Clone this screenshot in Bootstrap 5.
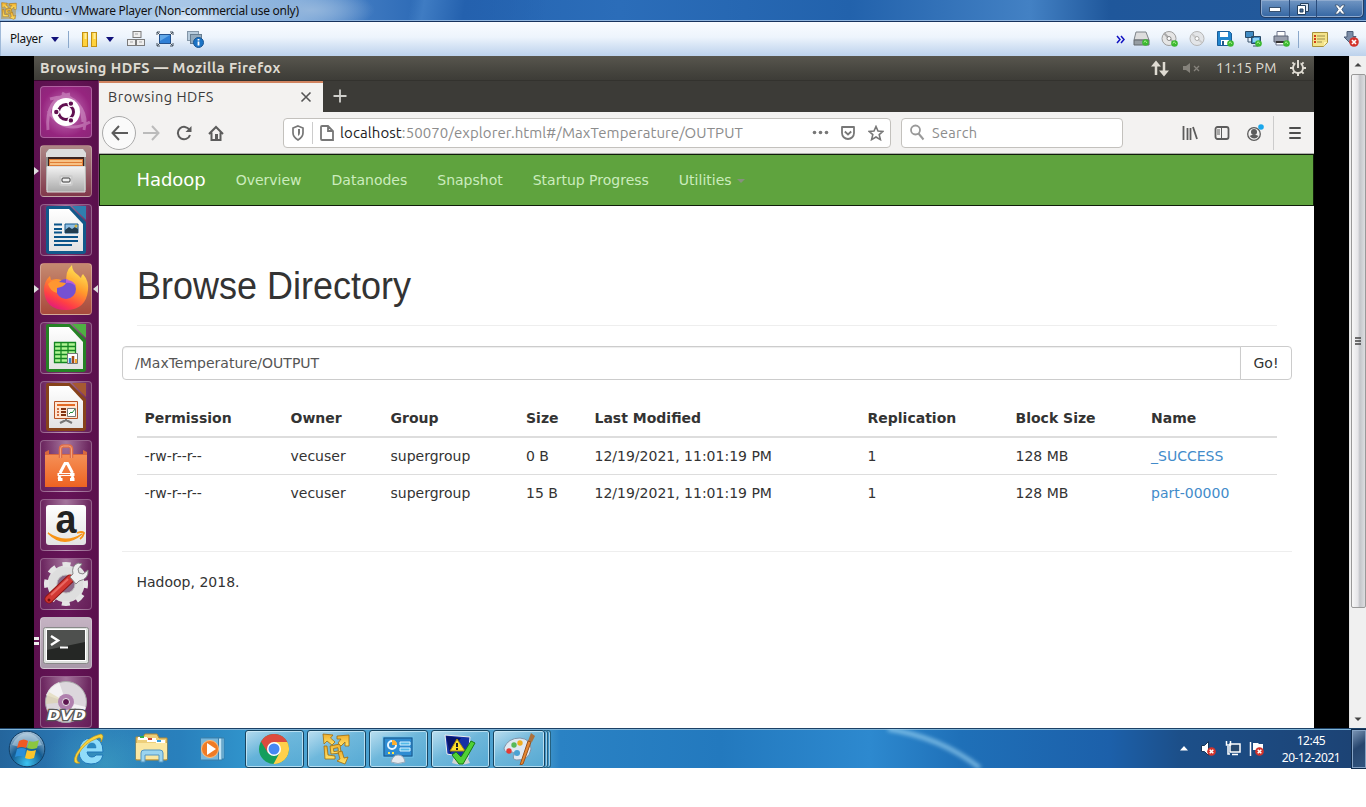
<!DOCTYPE html>
<html lang="en">
<head>
<meta charset="utf-8">
<title>Browsing HDFS</title>
<link href="https://cdn.jsdelivr.net/npm/bootstrap@5.3.0/dist/css/bootstrap.min.css" rel="stylesheet">
<style>
body{width:1366px;height:807px;overflow:hidden;background:#fff;font-family:"DejaVu Sans",sans-serif;font-size:14px;line-height:20px;color:#333}
svg{display:block;flex:none}
.winfont{font-family:"Noto Sans","Open Sans",sans-serif;font-size:12px;line-height:18px;color:#111}
.ubuntu{font-family:Ubuntu,"Noto Sans","Open Sans",sans-serif}
.titlebar{height:22px;padding-left:1px;border-bottom:1px solid #17335e;box-shadow:inset 0 -1px #8fb4dd;background:radial-gradient(ellipse 65px 20px at 310px 10px,#94b6dc 0,transparent 100%),radial-gradient(ellipse 45px 14px at 190px 20px,#e5effa,transparent),radial-gradient(ellipse 40px 12px at 42px 20px,#e5effa,transparent),linear-gradient(100deg,transparent 30%,#3f7cc3 31%,#2461ae 34%,transparent 40%),linear-gradient(90deg,#a5c5e6 0,#a8c7e7 200px,#7eaadb 300px,#3c77bf 370px,#2564b1 450px,#2b6db9 620px,#2262ac 850px,#4381c4 1030px,#1f579b 1110px,#245a9b 1366px)}
.caption-btns{width:104px;height:18px;margin-right:2px;border:1px solid #213c64;border-top:0;border-radius:0 0 5px 5px;box-shadow:inset 0 0 0 1px #8fabcf;background:linear-gradient(rgba(190,210,235,.5),rgba(90,130,180,.3))}
.caption-btns>span{height:18px;display:flex;align-items:center;justify-content:center;border-right:1px solid #294b7b}
.toolbar{height:34px;padding:0 6px 0 9px;background:linear-gradient(#f9fcff,#edf4fc 45%,#d6e4f5 70%,#bdd2ec);border-left:1px solid #9fb9d8}
.vsep{width:1px;background:#8ba8cb}
.stage{height:672px;background:#000}
.vm{width:1280px}
.panel-top{height:24px;background:linear-gradient(#58564e,#44433d 70%,#3d3c37);color:#dfdbd2;padding:0 7px 0 6px;font-size:14.5px}
.launcher{width:65px;background:linear-gradient(90deg,#5c114e,#651457 50%,#5a104c);padding:5px 0 0 6px;gap:7px;border-top:1px solid #35082d;border-right:1px solid #7b3a70;overflow:hidden}
.tile{width:52px;height:52px;flex:none;border-radius:4px;border:1px solid rgba(255,255,255,.28);background:radial-gradient(ellipse at 50% 0,rgba(255,255,255,.42),rgba(255,255,255,.1) 65%,rgba(255,255,255,.06));position:relative}
.tile>svg{position:absolute;left:-1px;top:-1px;overflow:visible}
.pip,.pip-r{position:absolute;top:21px;width:0;height:0;border:4px solid transparent}
.pip{left:-7px;border-left:5px solid #ddd;border-right:0}
.pip-r{right:-7px;border-right:5px solid #ddd;border-left:0}
.tabstrip{height:32px;background:#3c3b37;border-top:1px solid #33322e}
.tabx{width:224px;background:#f3f2f0;border-top:2px solid #d0835f;padding:0 11px 2px 9px;font-size:14.5px;color:#3b3b3b}
.navtools{height:42px;background:#f3f2f1;border-bottom:1px solid #aeb0ad}
.back{width:34px;height:34px;border:1px solid #aaa;border-radius:50%;background:#fafafa}
.field{height:30px;background:#fff;border:1px solid #c3c1bd;border-radius:4px;font-size:15px;color:#8c8c8c}
.hdfs{height:52px;background:#5fa33e;border:1px solid #101d0a;padding:0 0 0 36.500px}
.hdfs .navbar-brand{font-size:18px;color:#fff;margin:0 15px 0 0;padding:0;letter-spacing:-.05px}
.hdfs .navbar-nav .nav-link{color:#cbecbd;padding:0 15px;font-size:14px}
.caret{display:inline-block;border:4px solid transparent;border-top-color:#87907f;border-bottom:0;margin-left:1px;vertical-align:middle}
.page{background:#fff;height:522px;padding:59px 22px 0 23px}
.page h1{font-family:"Liberation Sans",Arial,sans-serif;font-size:36px;font-weight:400;line-height:40px;margin:0;transform:translateY(1px) scaleY(1.1);color:#333}
.header-box{margin:0 15px;padding-bottom:20px;border-bottom:1px solid #eee}
.pathbox{margin-top:20px;height:34px}
.pathbox .form-control{font-size:14px;line-height:20px;color:#555;border-color:#ccc;padding:6px 12px;border-radius:4px 0 0 4px;box-shadow:inset 0 1px 1px rgba(0,0,0,.075)}
.pathbox .btn{font-size:14px;line-height:20px;width:52px;padding:6px 0;border:1px solid #ccc;color:#333;background:#fff;border-radius:0 4px 4px 0}
.files{table-layout:fixed;width:1140px;margin:20px 15px 40px;border-collapse:separate;border-spacing:0}
.files th,.files td{padding:8px 8px 8px 7.500px;line-height:20px;white-space:nowrap}
.files thead th{height:38px;border-bottom:2px solid #ddd}
.files tbody tr+tr td{border-top:1px solid #ddd}
.files a{color:#428bca;text-decoration:none}
.rule{height:1px;background:#eee;margin-bottom:20px}
.scroller{width:17px;background:#f0f0f0;border-left:1px solid #e2e2e2}
.thumb{width:15px;height:534px;margin:2px 0 0 0;border:1px solid #999;border-radius:2px;background:linear-gradient(90deg,#f7f7f7,#e5e5e8 45%,#c3c5c9 60%,#dcdde0)}
.taskbar{height:40px;border-top:1px solid #1d4166;box-shadow:inset 0 1px #7fb4d8;background:radial-gradient(ellipse 60px 50px at 105px 35px,rgba(80,195,205,.35),transparent),linear-gradient(90deg,#24659c 0,#2a78b4 70px,#2980bc 180px,#3093cb 245px,#4aa2d2 300px,#4b9fce 540px,#2a82c4 560px,#2379be 720px,#2d89cf 870px,#1f70b8 960px,#1c60aa 1110px,#1c4f89 1180px,#1c4273 1366px)}
.sheen{left:880px;top:0;width:120px;height:39px;overflow:hidden}
.task{width:59px;height:38px;border:1px solid #174460;border-radius:3px;box-shadow:inset 0 0 0 1px rgba(210,238,250,.75);background:linear-gradient(150deg,rgba(225,243,250,.75),rgba(140,202,228,.55) 45%,rgba(100,180,215,.45));margin-right:3px}
.stackedge{width:4px;height:38px;border:1px solid #24607f;border-left:0;border-radius:0 3px 3px 0;box-shadow:inset -1px 0 #a1d0e6;margin-left:-1px}
.clock{font-size:12px;line-height:17px;color:#fff;width:60px;letter-spacing:-.4px}
.showdesk{width:14px;height:38px;border:1px solid #86a3c4;outline:1px solid #102b4c;background:linear-gradient(145deg,#7892b2,#27466e 45%,#31547e)}
</style>
</head>
<body>
<svg width="0" height="0" class="position-absolute" aria-hidden="true"><defs>
<linearGradient id="gold" x1="0" y1="0" x2="0" y2="1"><stop offset="0" stop-color="#f0ae2c"/><stop offset="1" stop-color="#ffe46a"/></linearGradient>
<linearGradient id="silver" x1="0" y1="0" x2="0" y2="1"><stop offset="0" stop-color="#f2f2f2"/><stop offset="1" stop-color="#a9a9a9"/></linearGradient>
<linearGradient id="paper" x1="0" y1="0" x2="0" y2="1"><stop offset="0" stop-color="#fff"/><stop offset="1" stop-color="#e3e3e3"/></linearGradient>
<linearGradient id="flame" x1=".8" y1="0" x2=".3" y2="1"><stop offset="0" stop-color="#fff05a"/><stop offset=".45" stop-color="#ff9a2c"/><stop offset=".8" stop-color="#ff3f45"/><stop offset="1" stop-color="#e31b7b"/></linearGradient>
<linearGradient id="bag" x1="0" y1="0" x2="0" y2="1"><stop offset="0" stop-color="#f58f55"/><stop offset="1" stop-color="#ee6322"/></linearGradient>
<radialGradient id="orb" cx=".5" cy=".9" r=".9"><stop offset="0" stop-color="#3cc4f2"/><stop offset=".5" stop-color="#155c92"/><stop offset="1" stop-color="#a9c3d8"/></radialGradient>
<symbol id="boxes" viewBox="0 0 28 32"><g fill="url(#gold)" stroke="#a06c0c" stroke-width=".8" stroke-linejoin="round"><path fill-rule="evenodd" d="M8 13l10-2 1 9-10 1zM11.500 15.500l4.500-.8.300 3.300-4.500.6z"/><path d="M1 1l10 1-2.500 3L13 9l-3 3-5-4-3 3z"/><path d="M15 3l12-1v11h-4V9l-4 4-3-3 3-4h-4z"/><path d="M16 19l4-1 2 7 4-1-3 7-8-3 3-2z"/><path d="M2 13l3 0 1 9 7 1v3H3z"/></g></symbol>
<symbol id="badge" viewBox="0 0 7 7"><circle cx="3.500" cy="3.500" r="3.300" fill="#3bb830"/><path d="M2 3.500l1.200-1.800L5 4" fill="none" stroke="#a9f28e"/></symbol>
<symbol id="redx" viewBox="0 0 10 10"><circle cx="5" cy="5" r="4.800" fill="#d3332b"/><path d="M3 3l4 4M7 3L3 7" stroke="#fff" stroke-width="1.700"/></symbol>
</defs></svg>

<header class="titlebar winfont d-flex align-items-center">
 <svg width="16" height="18"><rect y="1" width="15" height="16" fill="#b98a24" opacity=".45"/><use href="#boxes"/></svg>
 <span class="ms-1" style="letter-spacing:-.26px">Ubuntu - VMware Player (Non-commercial use only)</span>
 <div class="caption-btns ms-auto d-flex align-self-start">
  <span style="width:29px"><svg width="12" height="5"><rect x=".5" y=".5" width="11" height="4" fill="#fff" stroke="#37506f"/></svg></span>
  <span style="width:27px"><svg width="12" height="12"><path d="M3.500.5h8v8h-8z" fill="#dce6f2" stroke="#24405f"/><path d="M.5 2.500h8v9h-8z" fill="#fff" stroke="#24405f"/><path d="M3 6h3v3H3z" fill="#456b98" stroke="#24405f"/></svg></span>
  <span class="border-0 flex-fill"><svg width="12" height="11"><path d="M1 1h3l2 2.500L8 1h3L7.800 5.500 11 10H8L6 7.500 4 10H1l3.200-4.500z" fill="#fff" stroke="#37506f" stroke-width=".8"/></svg></span>
 </div>
</header>

<div class="toolbar winfont d-flex align-items-center">
 <span class="text-nowrap" style="width:41px;letter-spacing:-.3px;font-size:11.800px;margin-top:-2px">Player</span>
 <svg width="8" height="5"><path d="M0 0h8L4 5z" fill="#11117b"/></svg>
 <i class="vsep" style="height:17px;margin:0 13px 0 9px"></i>
 <svg width="15" height="15"><rect x=".5" y=".5" width="5" height="14" fill="#ffd23d" stroke="#c29116"/><rect x="9.500" y=".5" width="5" height="14" fill="#ffd23d" stroke="#c29116"/><path d="M3.500 1v6M12.500 1v6" stroke="#ffec9b" stroke-width="2"/></svg>
 <svg style="margin:0 13px 0 9px" width="8" height="5"><path d="M0 0h8L4 5z" fill="#11117b"/></svg>
 <svg width="18" height="16"><g fill="#eee" stroke="#7b7b7b"><rect x="6" y=".5" width="8" height="6"/><rect x=".5" y="8.500" width="8" height="6"/><rect x="9.500" y="8.500" width="8" height="6"/></g><path d="M8 3h3M3 11h3M12 11h3" stroke="#a7a7a7"/></svg>
 <svg style="margin:0 13px 0 11px" width="18" height="16"><path d="M3.500 3.500h11v9h-11z" fill="#2f7fd6" stroke="#225290"/><path d="M4 10l10-6H4z" fill="#62a8e8"/><path d="M1 4V1h3M14 1h3v3M17 12v3h-3M4 15H1v-3M1 1l3 3M17 1l-3 3M17 15l-3-3M1 15l3-3" stroke="#47525e" fill="none"/></svg>
 <svg width="17" height="17"><rect x=".5" y=".5" width="11" height="9" fill="#b7cbdc" stroke="#8396a8"/><rect x="3.500" y="3.500" width="11" height="9" fill="#93aabd" stroke="#667d91"/><circle cx="11.500" cy="11.500" r="5" fill="#1b73c5" stroke="#175594"/><path d="M11.500 10.500v4M11.500 8v1.500" stroke="#fff" stroke-width="1.800"/></svg>
 <div class="ms-auto d-flex align-items-center" style="gap:11px">
  <svg style="margin-right:-3px" width="9" height="9"><path d="M1 1l3 3.500L1 8M5 1l3 3.500L5 8" fill="none" stroke="#1212c2" stroke-width="1.500"/></svg>
  <svg width="17" height="16"><path d="M3 1h10l3 8H1z" fill="#ddd" stroke="#7e8489"/><path d="M1 9h15v5H1z" fill="#969da2" stroke="#62686d"/><use href="#badge" x="9" y="8" width="7" height="7"/></svg>
  <svg width="17" height="16"><circle cx="8" cy="7.500" r="7" fill="#e5e5e5" stroke="#9d9d9d"/><path d="M8 7.500L3 2M8 7.500l5 4" stroke="#aaa" stroke-width="2"/><circle cx="8" cy="7.500" r="2" fill="#fff" stroke="#888"/><use href="#badge" x="10" y="9" width="7" height="7"/></svg>
  <svg width="17" height="16"><circle cx="8" cy="7.500" r="7" fill="#e3e5e8" stroke="#b5b5b5"/><path d="M8 7.500L3 3M8 7.500l5 4" stroke="#ccc" stroke-width="2"/><circle cx="8" cy="7.500" r="2" fill="#fff" stroke="#aaa"/></svg>
  <svg width="17" height="16"><path d="M.5.500h12l2 2v12H.5z" fill="#2386cf" stroke="#195d99"/><path d="M3 1h8v5H3zM4 9h8v5H4z" fill="#fff"/><path d="M5 10h2v4H5z" fill="#235b87"/><use href="#badge" x="10" y="9" width="7" height="7"/></svg>
  <svg width="17" height="16"><path d="M.5.500h8v6h-8zM6.500 5.500h9v7h-9z" fill="#418cc4" stroke="#294a67"/><path d="M8 7h6v4H8z" fill="#8bd2f8"/><path d="M3 7v4h3M8 15h5" stroke="#38526a" fill="none"/><use href="#badge" x="10" y="9" width="7" height="7"/></svg>
  <svg width="17" height="16"><path d="M4 .5h8V6H4zM3 10h10v4H3z" fill="#fff" stroke="#6c748c"/><path d="M1 5h14v6H1z" fill="#999fae" stroke="#5b6274"/><path d="M3 11h9" stroke="#333" stroke-width="2"/><use href="#badge" x="10" y="9" width="7" height="7"/></svg>
  <i class="vsep" style="height:17px;margin-left:-3px"></i>
  <svg width="17" height="15" style="margin-left:2px"><path d="M.5.500h15v10l-4 4H.5z" fill="#f4e48a" stroke="#a8923c"/><path d="M2 4h2M2 7h2M2 10h2" stroke="#d33b19" stroke-width="2"/><path d="M5 4h8M5 7h8M5 10h5" stroke="#9d8e4c"/><path d="M12 14v-4h3z" fill="#fff5b2"/></svg>
  <svg width="17" height="16" style="margin-left:3px"><path d="M4 .5h6v5h3L7 12 1 6h3z" fill="#7b8da8" stroke="#4d5d77"/><use href="#redx" x="6" y="6" width="10" height="10"/></svg>
 </div>
</div>

<main class="stage d-flex">
 <div style="width:34px"></div>
 <div class="vm d-flex flex-column">
  <div class="panel-top ubuntu d-flex align-items-center">
   <b style="letter-spacing:.44px">Browsing HDFS — Mozilla Firefox</b>
   <div class="ms-auto d-flex align-items-center">
    <svg width="19" height="17"><path d="M5 15V4M13 2v11" stroke="#dfdbd2" stroke-width="2.500"/><path d="M0 6.500l5-6 5 6zM8 10.500h10l-5 6z" fill="#dfdbd2"/></svg>
    <svg style="margin:0 15px 0 13px" width="18" height="12"><path d="M0 4h3l4-3v10L3 8H0z" fill="#85827b"/><path d="M11 4l5 5M16 4l-5 5" stroke="#85827b" stroke-width="1.300"/></svg>
    <span class="text-nowrap" style="width:61px;letter-spacing:.22px;font-size:14px">11:15 PM</span>
    <svg style="margin-left:12px" width="18" height="18" fill="none" stroke="#dfdbd2"><circle cx="9" cy="9" r="5" stroke-width="2"/><path d="M1 9h3M14 9h3M9 14v3M3.400 3.400l2 2M14.600 3.400l-2 2M3.400 14.600l2-2M14.600 14.600l-2-2" stroke-width="2"/><path d="M9 1v8" stroke="#4b4a44" stroke-width="5"/><path d="M9 1v8" stroke-width="2"/></svg>
   </div>
  </div>
  <div class="d-flex flex-fill" style="height:648px">
   <nav class="launcher d-flex flex-column">
    <div class="tile" style="background:radial-gradient(circle,#c97dbe,#96257f 70%,#8c2679)"><svg width="52" height="52"><path d="M8 44Q5 12 30 8M44 44Q50 20 22 7M10 13Q42 4 43 36M50 36Q25 50 8 25" stroke="#dfaed7" opacity=".45" stroke-width="3" fill="none"/><circle cx="26" cy="26" r="14" fill="#fff"/><circle cx="26" cy="26" r="7.500" fill="none" stroke="#611051" stroke-width="3"/><path d="M26 26h-10M26 26l5-8.700M26 26l5 8.700" stroke="#fff" stroke-width="1.300"/><circle cx="26" cy="26" r="5.500" fill="#fff"/><g stroke="#fff" stroke-width="1.200" fill="#611051"><circle cx="16.300" cy="26" r="2.800"/><circle cx="30.900" cy="17.600" r="2.800"/><circle cx="30.900" cy="34.400" r="2.800"/></g></svg></div>
    <div class="tile" style="background:linear-gradient(#ad8786,#81384b)"><i class="pip"></i><svg width="52" height="52"><path d="M6 7l3-3h34l3 3v38H6z" fill="#8f8e8b"/><path d="M6 8l3-4h34l3 4v4H6z" fill="#ddd"/><path d="M8 12h36v10H8z" fill="#3b2420"/><path d="M9 14h34v8H9z" fill="#df7d36"/><path d="M10 16h32M10 19h32" stroke="#ffd7a0" stroke-width="1.300"/><path d="M7 21.500h38V47H7z" fill="url(#silver)" stroke="#ddd"/><rect x="20" y="31" width="12" height="9" rx="2" fill="#eee" stroke="#ccc" stroke-width="2"/><rect x="22" y="33" width="8" height="4" rx="1" fill="#eee" stroke="#333"/></svg></div>
    <div class="tile"><svg width="52" height="52"><path d="M6 4q0-2 2-2h22l16 16v29q0 3-3 3H9q-3 0-3-3z" fill="#12598b"/><path d="M9 5h20l14 15v27H9z" fill="url(#paper)"/><path d="M32 2h14v14z" fill="#2f7eaf"/><path d="M14 20.500h8M14 25h8M14 28.500h8M14 33h24M14 37h24M14 41h18" stroke="#0a5489" stroke-width="2"/><path d="M25 20h13v9H25z" fill="#8fbee3" stroke="#12598b"/><path d="M25 29v-3l4-3 3 2 3-2 3 2v4z" fill="#223d4f"/><circle cx="36" cy="22" r="1.500" fill="#d1b440"/></svg></div>
    <div class="tile" style="background:linear-gradient(#c58a70,#a8493b)"><i class="pip"></i><i class="pip-r"></i><svg width="52" height="52"><path d="M4 27q0-9 6-14l1 4 5-1q5 0 8 3l3 2q-3-12 5-19 0 6 6 10l3 3q0-2 2-4 6 7 5 16-2 20-22 20Q5 47 4 27z" fill="url(#flame)"/><circle cx="26" cy="26" r="10" fill="#7551d2"/><path d="M26 16q8 0 10 8-4-5-10-4z" fill="#b85fda"/><path d="M26 17q6 0 9 4 0-4-3-6z" fill="#ffb236"/><path d="M8 21q5-6 11-2l7 1q-2 4-9 5v5q-7-2-9-9" fill="#ff9630"/></svg></div>
    <div class="tile"><svg width="52" height="52"><path d="M6 4q0-2 2-2h22l16 16v29q0 3-3 3H9q-3 0-3-3z" fill="#258225"/><path d="M9 5h20l14 15v27H9z" fill="url(#paper)"/><path d="M32 2h14v14z" fill="#4fb043"/><path d="M14 20h21v20H14z" fill="#b0f594"/><path d="M14 20.500h22M14 24.500h22M14 28.500h22M14 32.500h22M14 36.500h22M14 40.500h22M14.500 20v21M21 20v21M28 20v21M35.500 20v21" stroke="#158622" fill="none" stroke-width="1.300"/><path d="M27.500 31.500h10v10h-10z" fill="#fff" stroke="#777"/><path d="M30 41v-5" stroke="#3485c9" stroke-width="2.500"/><path d="M33 41v-7" stroke="#a34a18" stroke-width="2.500"/><path d="M36 41v-4" stroke="#f4a62a" stroke-width="2"/></svg></div>
    <div class="tile"><svg width="52" height="52"><path d="M6 4q0-2 2-2h22l16 16v29q0 3-3 3H9q-3 0-3-3z" fill="#87431b"/><path d="M9 5h20l14 15v27H9z" fill="url(#paper)"/><path d="M32 2h14v14z" fill="#a65931"/><path d="M14.500 20.500h23v17h-23z" fill="#ffe4d0" stroke="#b85324"/><path d="M17 24h18" stroke="#e36a25" stroke-width="2"/><path d="M17 28h2M17 31h2M17 34h2" stroke="#cd7045" stroke-width="2"/><path d="M21 28h5M21 31h5M21 34h5" stroke="#833412" stroke-width="2"/><path d="M27.500 27.500h8v8h-8z" fill="#fff" stroke="#777"/><path d="M29 33l2-2 1 1 3-4" fill="none" stroke="#238b36"/><path d="M26 38v2M26 39l-6 3M26 39l6 3" stroke="#777" stroke-width="2"/></svg></div>
    <div class="tile"><svg width="52" height="52"><path d="M5 12l4-2v4h34v-4l4 2v35H5z" fill="#d9683d"/><path d="M5 15h42v32H5z" fill="url(#bag)"/><path d="M20.500 18V9q0-3 3-3h5q3 0 3 3v9" fill="none" stroke="#df6e47" stroke-width="3.500"/><path d="M20.500 18V9q0-3 3-3h5q3 0 3 3v9" fill="none" stroke="#f2a27e" stroke-width="1"/><path d="M20 33l5-9.500h2.500l5 9.500" stroke="#fff" stroke-width="3" fill="none"/><path d="M17.500 34.500h17M18 39.500h4.500M30 39.500h4.500M20 36l-1 3M32 36l1 3" stroke="#fff" stroke-width="3"/><path d="M19 34.500h11" stroke="#ed7440"/></svg></div>
    <div class="tile"><svg width="52" height="52"><rect x="6" y="6" width="40" height="40" rx="3" fill="url(#paper)"/><text x="15.500" y="33.500" textLength="21" lengthAdjust="spacingAndGlyphs" font-family="Liberation Sans,sans-serif" font-size="41" font-weight="bold" fill="#222">a</text><path d="M8 34q18 12 34 1-18 15-34-1" stroke="#f79317" stroke-width="1.500" fill="#f79317"/><path d="M37 34q5-2 7 0-1 4-4 6" fill="none" stroke="#f79317" stroke-width="1.800"/></svg></div>
    <div class="tile"><svg width="52" height="52"><circle cx="26" cy="26" r="13.500" fill="none" stroke="#dedede" stroke-width="10"/><circle cx="26" cy="26" r="19.500" fill="none" stroke="#e5e5e5" stroke-width="5" stroke-dasharray="8 7.300" stroke-dashoffset="4"/><circle cx="26" cy="26" r="9" fill="#8b6887" stroke="#bbb"/><path d="M9 41l21-20" stroke="#8d1717" stroke-width="9" stroke-linecap="round"/><path d="M9 41l21-20" stroke="#d23833" stroke-width="7" stroke-linecap="round"/><path d="M11 37l17-16" stroke="#e96862" stroke-width="2"/><path d="M30 19l3-3q-2-8 5-11l4 1-4 5 1 4 4 1 5-4q1 9-9 11l-3 3z" fill="#eee" stroke="#888"/><circle cx="9" cy="42" r="1.500" fill="#711"/></svg></div>
    <div class="tile" style="background:linear-gradient(#c5b3c3,#a99aaa)"><i class="pip" style="top:19px;border:0;width:5px;height:3px;background:#eee"></i><i class="pip" style="top:24px;border:0;width:5px;height:3px;background:#eee"></i><svg width="52" height="52"><rect x="3.500" y="10.500" width="45" height="36" rx="2" fill="#dfe2df" stroke="#888"/><rect x="6.500" y="12.500" width="39" height="31" fill="#252725" stroke="#fff"/><path d="M7 13h38v12L7 33z" fill="#4e504e"/><path d="M11 19l7 4.500-7 4.500" fill="none" stroke="#fff" stroke-width="2.500"/><path d="M20 30.500h8" stroke="#fff" stroke-width="2"/></svg></div>
    <div class="tile"><svg width="52" height="52"><circle cx="26" cy="26" r="20.500" fill="#dcd7dc" stroke="#aaa"/><path d="M26 26L6 19q4-10 13-13zM26 26l20 5q-2 7-7 10z" fill="#fff" opacity=".65"/><path d="M26 26L6 28q0-7 3-12z" fill="#d9cf9e" opacity=".5"/><circle cx="26" cy="26" r="8" fill="#b080ae"/><circle cx="26" cy="26" r="3.500" fill="#5d1650" stroke="#eee"/><text x="7" y="43.500" textLength="39" lengthAdjust="spacingAndGlyphs" font-family="DejaVu Sans,sans-serif" font-size="14" font-weight="bold" font-style="italic" fill="#fff" stroke="#555" stroke-width="2.500" paint-order="stroke">DVD</text></svg></div>
   </nav>
   <section class="flex-fill d-flex flex-column" style="width:1215px">
    <div class="tabstrip ubuntu d-flex">
     <div class="tabx d-flex align-items-center justify-content-between"><span style="letter-spacing:.47px">Browsing HDFS</span><svg width="12" height="12"><path d="M1.500 1.500l9 9M10.500 1.500l-9 9" stroke="#555" stroke-width="1.600"/></svg></div>
     <svg class="align-self-center" style="margin:-2px 0 0 9px" width="16" height="16"><path d="M8 1.500v13M1.500 8h13" stroke="#d0d0cc" stroke-width="1.800"/></svg>
    </div>
    <div class="navtools ubuntu d-flex align-items-center">
     <div class="back d-flex align-items-center justify-content-center" style="margin-left:3px"><svg width="17" height="16"><path d="M8 1L1.500 8 8 15M2 8h15" fill="none" stroke="#5c5c5c" stroke-width="2"/></svg></div>
     <svg style="margin-left:7px" width="17" height="16"><path d="M9 1l6.500 7L9 15M0 8h15" fill="none" stroke="#bbb" stroke-width="2"/></svg>
     <svg style="margin-left:16px" width="16" height="16"><path d="M13.500 5A6.200 6.200 0 1 0 14 10" fill="none" stroke="#5c5c5c" stroke-width="2"/><path d="M15.500 1v6h-6z" fill="#5c5c5c"/></svg>
     <svg style="margin-left:16px" width="16" height="16"><path d="M1 9l7-7 7 7M3.500 7.500V15h9V7.500" fill="none" stroke="#5c5c5c" stroke-width="2"/><path d="M7 9h3v6H7z" fill="#5c5c5c"/></svg>
     <div class="field d-flex align-items-center" style="width:608px;margin-left:59px;padding:0 6px 0 7px">
      <svg width="14" height="16"><path d="M7 1l5 2v5q0 4-5 7-5-3-5-7V3z" fill="none" stroke="#777" stroke-width="1.700"/><path d="M7 4v7q2-1 2-3V4z" fill="#777"/></svg>
      <i style="height:22px;width:1px;background:#ccc;margin:0 7px"></i>
      <svg width="14" height="16"><path d="M2 1h6l5 5v9H2q-1 0-1-1V2q0-1 1-1M8 1v5h5" fill="none" stroke="#777" stroke-width="1.800"/></svg>
      <span class="text-nowrap" style="margin-left:6px;letter-spacing:.09px"><span style="color:#222">localhost</span>:50070/explorer.html#/MaxTemperature/OUTPUT</span>
      <svg class="ms-auto" width="17" height="5"><circle cx="2.500" cy="2.500" r="1.800" fill="#777"/><circle cx="8.500" cy="2.500" r="1.800" fill="#777"/><circle cx="14.500" cy="2.500" r="1.800" fill="#777"/></svg>
      <svg style="margin:0 12px 0 11px" width="16" height="16"><path d="M2 2h12v6a6 6 0 0 1-12 0z" fill="none" stroke="#777" stroke-width="1.800" stroke-linejoin="round"/><path d="M4.800 6.500L8 9.500l3.200-3" fill="none" stroke="#777" stroke-width="1.800"/></svg>
      <svg width="16" height="16"><path d="M8 1.500l2 4.500 5 .4-3.800 3.200 1.200 5L8 12l-4.400 2.600 1.200-5L1 6.400 6 6z" fill="none" stroke="#777" stroke-width="1.600"/></svg>
     </div>
     <div class="field d-flex align-items-center" style="width:222px;margin-left:10px;padding-left:8px">
      <svg width="15" height="17"><circle cx="5.500" cy="6" r="4.500" fill="none" stroke="#999" stroke-width="1.800"/><path d="M8.500 9.500l5 6" stroke="#999" stroke-width="2"/></svg><span style="margin-left:7px;font-size:14.5px;letter-spacing:.3px">Search</span>
     </div>
     <svg style="margin-left:59px" width="16" height="15"><path d="M1.500 1v14M5.500 3v12M8.500 3v12M11 2l4 12" stroke="#5c5c5c" stroke-width="1.800"/></svg>
     <svg style="margin-left:16px" width="16" height="16"><rect x="1.500" y="2" width="13" height="12" rx="2" fill="none" stroke="#5c5c5c" stroke-width="1.800"/><path d="M7.500 2v12M3 5h3M3 7h3M3 9h3" stroke="#5c5c5c"/></svg>
     <svg style="margin-left:16px" width="20" height="22"><circle cx="8" cy="12" r="6.300" fill="none" stroke="#5c5c5c" stroke-width="1.300"/><circle cx="8" cy="10" r="3" fill="#5c5c5c"/><path d="M3.500 14q4.500-2.500 9 0-4 5-9 0" fill="#5c5c5c"/><circle cx="15" cy="5" r="2.800" fill="#1aa7ec"/></svg>
     <i style="width:1px;height:34px;background:#ccc;margin-left:7px"></i>
     <svg style="margin-left:15px" width="12" height="14"><path d="M1 2h10M1 7h10M1 12h10" stroke="#4d4d4d" stroke-width="1.900" stroke-linecap="round"/></svg>
    </div>
    <nav class="navbar navbar-expand hdfs">
     <a class="navbar-brand" href="#">Hadoop</a>
     <div class="navbar-nav"><a class="nav-link" href="#">Overview</a><a class="nav-link" href="#">Datanodes</a><a class="nav-link" href="#">Snapshot</a><a class="nav-link" href="#">Startup Progress</a><a class="nav-link" href="#">Utilities <span class="caret"></span></a></div>
    </nav>
    <div class="page">
     <div class="header-box"><h1>Browse Directory</h1></div>
     <div class="input-group pathbox"><input class="form-control" value="/MaxTemperature/OUTPUT" aria-label="Directory"><button class="btn" type="button">Go!</button></div>
     <table class="files">
      <colgroup><col style="width:146px"><col style="width:100px"><col style="width:135.500px"><col style="width:68.500px"><col style="width:273px"><col style="width:148px"><col style="width:135.500px"><col></colgroup>
      <thead><tr><th>Permission</th><th>Owner</th><th>Group</th><th>Size</th><th>Last Modified</th><th>Replication</th><th>Block Size</th><th>Name</th></tr></thead>
      <tbody>
       <tr><td>-rw-r--r--</td><td>vecuser</td><td>supergroup</td><td>0 B</td><td>12/19/2021, 11:01:19 PM</td><td>1</td><td>128 MB</td><td><a href="#">_SUCCESS</a></td></tr>
       <tr><td>-rw-r--r--</td><td>vecuser</td><td>supergroup</td><td>15 B</td><td>12/19/2021, 11:01:19 PM</td><td>1</td><td>128 MB</td><td><a href="#">part-00000</a></td></tr>
      </tbody>
     </table>
     <div class="rule"></div>
     <div style="padding-left:14.500px">Hadoop, 2018.</div>
    </div>
   </section>
  </div>
 </div>
 <div class="scroller ms-auto d-flex flex-column align-items-center">
  <svg width="16" height="16"><path d="M4.500 10.500h7L8 7z" fill="#444"/></svg>
  <div class="thumb d-flex align-items-center justify-content-center"><svg width="8" height="9"><path d="M1 1h6M1 4h6M1 7h6" stroke="#444" stroke-width="1.500"/></svg></div>
  <svg class="mt-auto" width="16" height="17"><path d="M4.500 6.500h7L8 10z" fill="#444"/></svg>
 </div>
</main>

<footer class="taskbar d-flex align-items-center position-relative">
 <div class="sheen position-absolute"><svg width="120" height="39"><path d="M8 0Q60 8 100 39" fill="none" stroke="#a7dcf6" stroke-width="4" opacity=".75" style="filter:blur(2px)"/></svg></div>
 <svg style="margin-left:8px" width="38" height="38"><circle cx="19" cy="19" r="17.800" fill="url(#orb)" stroke="#123f66"/><path d="M4 15Q10 3 19 3t15 12q-15 5-30 0" fill="#dceaf3" opacity=".4"/><path d="M11 11q5-3 9 0l-2 7q-4-2-9 0z" fill="#ef5a24"/><path d="M21 11q5 2 10-1l-2 8q-5 2-10 0z" fill="#8cc63f"/><path d="M9 19q5-2 9 0l-2 8q-4-2-9 0z" fill="#2b8fd9"/><path d="M19 20q4 2 9 0l-2 8q-5 2-9 0z" fill="#fdc52c"/></svg>
 <svg style="margin-left:28px" width="30" height="32"><path d="M5 18q1-13 13-13 11 0 11 14H13q1 5 5 5 3 0 4-2h7q-2 9-12 9Q5 31 5 18z" fill="#8fdcfa" stroke="#1f77b8"/><path d="M13 15q1-5 5-5t4 5z" fill="#2a8ac2" stroke="#1f77b8" stroke-width=".5"/><path d="M6 30Q-3 32 2 21 12 4 27 1q4 1 0 8 1-5-3-4Q10 10 4 22q-3 6 2 8" fill="#f7d33e" stroke="#bb9018" stroke-width=".6"/></svg>
 <svg style="margin-left:31px" width="33" height="31"><path d="M1 4h7l2-3h12l2 4h8v22H1z" fill="#edcf7a" stroke="#b38a34"/><path d="M3 4h9v3H3zM12 5h9v4h-9zM21 7h9v4h-9z" fill="#fff"/><path d="M5 3h4v2H5z" fill="#2daf4a"/><path d="M13 5h4v2h-4z" fill="#c43"/><path d="M22 7h4v2h-4z" fill="#38a1db"/><path d="M1 10h31v16H1z" fill="#fae7a2"/><path d="M6 29v-9q0-3 3-3h16q3 0 3 3v9h-4v-7H10v7z" fill="#9bd4ef" stroke="#5595c0"/></svg>
 <svg style="margin-left:32px" width="30" height="28"><path d="M4 3h20v21H4z" fill="#9cd5f1" stroke="#347fab"/><path d="M3 3h19v22H3z" fill="#c0e4f5" stroke="#347fab"/><path d="M.5 3h18v22H.5z" fill="#79b8dc" stroke="#3b82b1"/><circle cx="10" cy="14" r="8.500" fill="#ef7b25" stroke="#ffbc79"/><path d="M7 8l9 6-9 6z" fill="#fff"/></svg>
 <div class="task d-flex align-items-center justify-content-center" style="margin-left:14.500px"><svg width="30" height="30"><circle cx="15" cy="15" r="15" fill="#159e5c"/><path d="M15 8h13.300A15 15 0 0 1 14.500 30L21 18z" fill="#ffd04b"/><path d="M2 7.500L9 19l6-11h13.300A15 15 0 0 0 2 7.500" fill="#dd4b3e"/><circle cx="15" cy="15" r="7" fill="#fff"/><circle cx="15" cy="15" r="5.500" fill="#4688f4"/></svg></div>
 <div class="task d-flex align-items-center justify-content-center"><svg width="28" height="32"><use href="#boxes"/></svg></div>
 <div class="task d-flex align-items-center justify-content-center"><svg width="32" height="30"><rect x="1" y="3" width="30" height="20" fill="#2f8cd2" stroke="#71c4ee"/><rect x="2" y="4" width="28" height="18" fill="none" stroke="#1c5786"/><circle cx="10" cy="11" r="4" fill="none" stroke="#e8f6ff" stroke-width="2"/><path d="M10 11V6q5 0 5 5z" fill="#ffad2b"/><path d="M18 8h10v3H18zM18 14h10v3H18z" fill="#52b9e8" stroke="#d9f3ff"/><path d="M6 19h2M10 19h2" stroke="#ffe64b" stroke-width="2"/><path d="M9 28q2-7 7-7 6 0 7 7-7 3-14 0" fill="#e4e8ed" stroke="#99a9b9"/></svg></div>
 <div class="task d-flex align-items-center justify-content-center"><svg width="34" height="32"><path d="M11 24h13l3 6q-9 3-18 0z" fill="#d3d3d3"/><path d="M2 2l25 2-2 21L4 21z" fill="#1632a5" stroke="#eee"/><path d="M3 3l15 2L7 21z" fill="#08146a"/><path d="M14 6l8 12H7z" fill="#ffe12e" stroke="#a88a0c"/><path d="M14 10v4M14 15v2" stroke="#222" stroke-width="2"/><path d="M9 22l4-3 5 5L28 8l4 2-12 21h-4z" fill="#4fd136" stroke="#197b14"/></svg></div>
 <div class="task d-flex align-items-center justify-content-center me-0" style="width:52px"><svg width="33" height="32"><path d="M2 15Q6 5 18 5q11 1 11 11-2 12-15 11-4-1-2-5 1-3-3-3-7 1-7-4" fill="#dfe8f1" stroke="#8094a8"/><circle cx="7" cy="18" r="2.700" fill="#e33a35"/><circle cx="12" cy="12" r="2.700" fill="#58b957"/><circle cx="18" cy="10" r="2.700" fill="#efae22"/><circle cx="15" cy="20" r="3" fill="#4aa2d2"/><path d="M26 8l3-8 4 3-3 6z" fill="#ac713d"/><path d="M26 8l3 1-8 22-3 1z" fill="#e78732" stroke="#98531d"/></svg></div>
 <i class="stackedge"></i><i class="stackedge"></i>
 <div class="ms-auto d-flex align-items-center">
  <svg width="8" height="5" class="align-self-center"><path d="M0 4.500h8L4 0z" fill="#fff"/></svg>
  <svg style="margin-left:13px" width="16" height="16"><path d="M.5 4.500h3l4-4v14l-4-4h-3z" fill="#fff" stroke="#173456"/><use href="#redx" x="6" y="6" width="9" height="9"/></svg>
  <svg style="margin-left:8px" width="17" height="15"><rect x="5" y="3" width="10" height="8" fill="#28496e" stroke="#fff" stroke-width="1.500"/><path d="M7 13.500h6M3 5v8h2M1.500 0v4h4V0" stroke="#fff" stroke-width="1.500" fill="none"/></svg>
  <svg style="margin-left:7px" width="16" height="16"><path d="M1.500 1v14" stroke="#fff" stroke-width="1.500"/><path d="M4 2h5l1 1h4v6H4z" fill="#fff"/><use href="#redx" x="6" y="6" width="9" height="9"/></svg>
  <div class="winfont clock text-center" style="margin-left:16px">12:45<br>20-12-2021</div>
  <div class="showdesk" style="margin-left:11px"></div>
 </div>
</footer>
<script src="https://cdn.jsdelivr.net/npm/bootstrap@5.3.0/dist/js/bootstrap.bundle.min.js"></script>
</body>
</html>
